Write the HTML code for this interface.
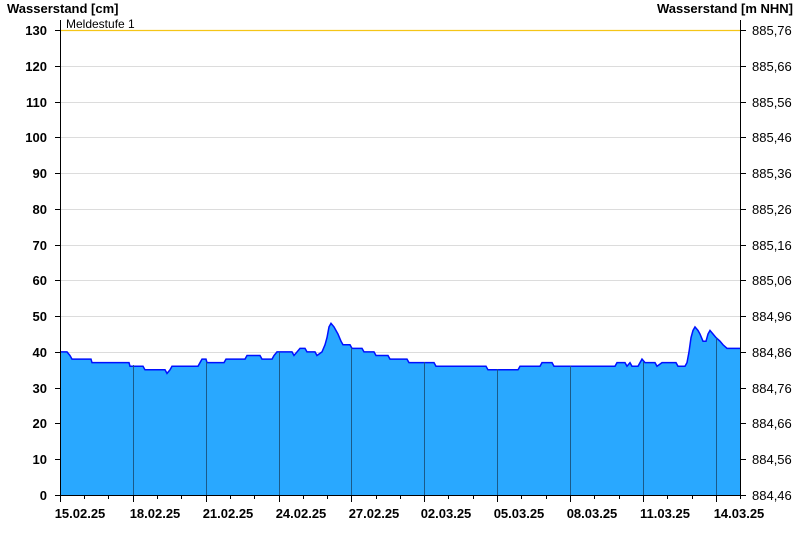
<!DOCTYPE html>
<html><head><meta charset="utf-8"><style>
body{margin:0;background:#fff;width:800px;height:550px;overflow:hidden}
svg{display:block}
text{font-family:"Liberation Sans",Arial,sans-serif}
</style></head><body>
<svg width="800" height="550" viewBox="0 0 800 550">
<g stroke="#dcdcdc" stroke-width="1">
<line x1="60" x2="740" y1="459.5" y2="459.5"/><line x1="60" x2="740" y1="423.5" y2="423.5"/>
<line x1="60" x2="740" y1="388.5" y2="388.5"/><line x1="60" x2="740" y1="352.5" y2="352.5"/>
<line x1="60" x2="740" y1="316.5" y2="316.5"/><line x1="60" x2="740" y1="280.5" y2="280.5"/>
<line x1="60" x2="740" y1="245.5" y2="245.5"/><line x1="60" x2="740" y1="209.5" y2="209.5"/>
<line x1="60" x2="740" y1="173.5" y2="173.5"/><line x1="60" x2="740" y1="137.5" y2="137.5"/>
<line x1="60" x2="740" y1="102.5" y2="102.5"/><line x1="60" x2="740" y1="66.5" y2="66.5"/>
</g>
<line x1="60" x2="740" y1="30.5" y2="30.5" stroke="#f5c518" stroke-width="1.3"/>
<text x="66" y="28" font-size="12" fill="#000">Meldestufe 1</text>
<g transform="translate(0,495) scale(1,-3.577)">
<polygon fill="#29a8ff" points="60,0 60,40 67,40 70,39 72,38 91,38 92,37 129,37 130,36 143,36 145,35 165,35 167,34 170,35 172,36 198,36 200,37 202,38 206,38 207,37 224,37 226,38 245,38 247,39 260,39 262,38 272,38 274,39 277,40 292,40 294,39 297,40 300,41 305,41 307,40 315,40 317,39 322,40 325,42 327,44 329,47 331,48 334,47 336,46 338,45 341,43 343,42 350,42 352,41 362,41 364,40 374,40 376,39 388,39 390,38 407,38 409,37 434,37 436,36 486,36 488,35 518,35 520,36 540,36 542,37 552,37 554,36 615,36 617,37 625,37 627,36 630,37 632,36 638,36 640,37 642,38 645,37 655,37 657,36 662,37 676,37 678,36 685,36 687,37 689,40 691,44 693,46 695,47 698,46 700,45 703,43 706,43 708,45 710,46 713,45 716,44 720,43 723,42 727,41 740,41 740,0"/>
<polyline fill="none" stroke="#0010ff" stroke-width="1.5" vector-effect="non-scaling-stroke" points="60,40 67,40 70,39 72,38 91,38 92,37 129,37 130,36 143,36 145,35 165,35 167,34 170,35 172,36 198,36 200,37 202,38 206,38 207,37 224,37 226,38 245,38 247,39 260,39 262,38 272,38 274,39 277,40 292,40 294,39 297,40 300,41 305,41 307,40 315,40 317,39 322,40 325,42 327,44 329,47 331,48 334,47 336,46 338,45 341,43 343,42 350,42 352,41 362,41 364,40 374,40 376,39 388,39 390,38 407,38 409,37 434,37 436,36 486,36 488,35 518,35 520,36 540,36 542,37 552,37 554,36 615,36 617,37 625,37 627,36 630,37 632,36 638,36 640,37 642,38 645,37 655,37 657,36 662,37 676,37 678,36 685,36 687,37 689,40 691,44 693,46 695,47 698,46 700,45 703,43 706,43 708,45 710,46 713,45 716,44 720,43 723,42 727,41 740,41"/>
</g>
<g stroke="#1a5a8a" stroke-width="1">
<line x1="133.5" x2="133.5" y1="365" y2="495"/><line x1="206.5" x2="206.5" y1="362" y2="495"/>
<line x1="279.5" x2="279.5" y1="352" y2="495"/><line x1="351.5" x2="351.5" y1="348" y2="495"/>
<line x1="424.5" x2="424.5" y1="362" y2="495"/><line x1="497.5" x2="497.5" y1="369" y2="495"/>
<line x1="570.5" x2="570.5" y1="366" y2="495"/><line x1="643.5" x2="643.5" y1="362" y2="495"/>
<line x1="716.5" x2="716.5" y1="338" y2="495"/>
</g>
<g stroke="#000" stroke-width="1">
<line x1="60.5" x2="60.5" y1="20" y2="495"/><line x1="740.5" x2="740.5" y1="20" y2="495"/>
<line x1="55" x2="746" y1="495.5" y2="495.5"/>
<path d="M55 459.5h5M55 423.5h5M55 388.5h5M55 352.5h5M55 316.5h5M55 280.5h5M55 245.5h5M55 209.5h5M55 173.5h5M55 137.5h5M55 102.5h5M55 66.5h5M55 30.5h5"/>
<path d="M740 459.5h6M740 423.5h6M740 388.5h6M740 352.5h6M740 316.5h6M740 280.5h6M740 245.5h6M740 209.5h6M740 173.5h6M740 137.5h6M740 102.5h6M740 66.5h6M740 30.5h6"/>
<path d="M60.5 495v7M133.5 495v7M206.5 495v7M279.5 495v7M351.5 495v7M424.5 495v7M497.5 495v7M570.5 495v7M643.5 495v7M716.5 495v7"/>
<path d="M84.5 495v4M108.5 495v4M157.5 495v4M181.5 495v4M230.5 495v4M254.5 495v4M303.5 495v4M327.5 495v4M376.5 495v4M400.5 495v4M448.5 495v4M473.5 495v4M521.5 495v4M546.5 495v4M594.5 495v4M619.5 495v4M667.5 495v4M692.5 495v4M740.5 495v4"/>
</g>
<g font-size="13" font-weight="bold" fill="#000">
<text x="7" y="13">Wasserstand [cm]</text>
<text x="793" y="13" text-anchor="end">Wasserstand [m NHN]</text>
<g text-anchor="end">
<text x="47" y="500">0</text><text x="47" y="464">10</text><text x="47" y="428">20</text><text x="47" y="393">30</text>
<text x="47" y="357">40</text><text x="47" y="321">50</text><text x="47" y="285">60</text><text x="47" y="250">70</text>
<text x="47" y="214">80</text><text x="47" y="178">90</text><text x="47" y="142">100</text><text x="47" y="107">110</text>
<text x="47" y="71">120</text><text x="47" y="35">130</text>
</g>
<g text-anchor="middle">
<text x="80" y="518">15.02.25</text><text x="155" y="518">18.02.25</text><text x="228" y="518">21.02.25</text>
<text x="301" y="518">24.02.25</text><text x="374" y="518">27.02.25</text><text x="446" y="518">02.03.25</text>
<text x="519" y="518">05.03.25</text><text x="592" y="518">08.03.25</text><text x="665" y="518">11.03.25</text>
<text x="739" y="518">14.03.25</text>
</g>
</g>
<g font-size="13" fill="#000">
<text x="752" y="500">884,46</text><text x="752" y="464">884,56</text><text x="752" y="428">884,66</text>
<text x="752" y="393">884,76</text><text x="752" y="357">884,86</text><text x="752" y="321">884,96</text>
<text x="752" y="285">885,06</text><text x="752" y="250">885,16</text><text x="752" y="214">885,26</text>
<text x="752" y="178">885,36</text><text x="752" y="142">885,46</text><text x="752" y="107">885,56</text>
<text x="752" y="71">885,66</text><text x="752" y="35">885,76</text>
</g>
</svg>
</body></html>
